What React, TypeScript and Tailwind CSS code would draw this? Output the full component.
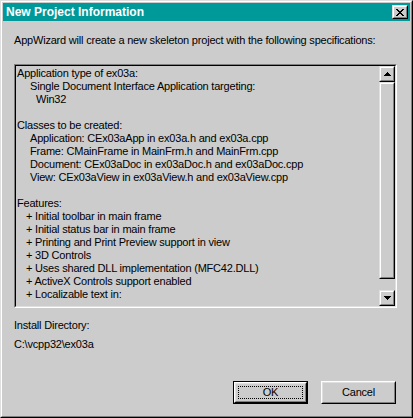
import type { ReactNode } from 'react';

const font = "font-['Liberation_Sans',Arial,sans-serif]";

const specLines: [number, string][] = [
  [0, 'Application type of ex03a:'],
  [13, 'Single Document Interface Application targeting:'],
  [19, 'Win32'],
  [0, ''],
  [0, 'Classes to be created:'],
  [13, 'Application: CEx03aApp in ex03a.h and ex03a.cpp'],
  [13, 'Frame: CMainFrame in MainFrm.h and MainFrm.cpp'],
  [13, 'Document: CEx03aDoc in ex03aDoc.h and ex03aDoc.cpp'],
  [13, 'View: CEx03aView in ex03aView.h and ex03aView.cpp'],
  [0, ''],
  [0, 'Features:'],
  [9, '+ Initial toolbar in main frame'],
  [9, '+ Initial status bar in main frame'],
  [9, '+ Printing and Print Preview support in view'],
  [9, '+ 3D Controls'],
  [9, '+ Uses shared DLL implementation (MFC42.DLL)'],
  [9, '+ ActiveX Controls support enabled'],
  [9, '+ Localizable text in:'],
];

// raised bevel used by scrollbar parts and the caption button
function Raised({ className, children }: { className?: string; children?: ReactNode }) {
  return (
    <div className={`border border-t-[#dfdfdf] border-l-[#dfdfdf] border-r-black border-b-black ${className ?? ''}`}>
      <div className="w-full h-full border border-t-white border-l-white border-r-[#808080] border-b-[#808080] bg-[#cccccc] flex items-center justify-center">
        {children}
      </div>
    </div>
  );
}

function Arrow({ down }: { down?: boolean }) {
  return (
    <svg width="7" height="4" viewBox="0 0 7 4" shapeRendering="crispEdges" className={down ? 'rotate-180' : ''}>
      <rect x="3" y="0" width="1" height="1" fill="#000" />
      <rect x="2" y="1" width="3" height="1" fill="#000" />
      <rect x="1" y="2" width="5" height="1" fill="#000" />
      <rect x="0" y="3" width="7" height="1" fill="#000" />
    </svg>
  );
}

function CloseGlyph() {
  const px: [number, number, number][] = [
    [0, 0, 2], [6, 0, 2],
    [1, 1, 2], [5, 1, 2],
    [2, 2, 4],
    [3, 3, 2],
    [2, 4, 4],
    [1, 5, 2], [5, 5, 2],
    [0, 6, 2], [6, 6, 2],
  ];
  return (
    <svg width="8" height="7" viewBox="0 0 8 7" shapeRendering="crispEdges">
      {px.map(([x, y, w], i) => (
        <rect key={i} x={x} y={y} width={w} height="1" fill="#000" />
      ))}
    </svg>
  );
}

function PushButton({ label, isDefault }: { label: string; isDefault?: boolean }) {
  const bevel = (
    <div className="w-full h-full border border-t-white border-l-white border-r-black border-b-black">
      <div className="w-full h-full border border-t-[#dfdfdf] border-l-[#dfdfdf] border-r-[#808080] border-b-[#808080] flex items-center justify-center p-[2px]">
        {isDefault ? (
          <div className="w-full h-full border border-dotted border-black flex items-center justify-center">{label}</div>
        ) : (
          label
        )}
      </div>
    </div>
  );
  return (
    <div className={`w-[75px] h-[23px] ${isDefault ? 'border border-black' : ''}`}>{bevel}</div>
  );
}

export default function App() {
  return (
    <div className={`w-[413px] h-[418px] bg-[#cccccc] text-black text-[11px] leading-[13px] tracking-[-0.2px] ${font}`}>
      <div className="w-full h-full border border-t-[#dfdfdf] border-l-[#dfdfdf] border-r-black border-b-black">
        <div className="w-full h-full border border-t-white border-l-white border-r-[#808080] border-b-[#808080] p-px flex flex-col">
          {/* caption */}
          <div className="h-[18px] bg-[#009999] flex items-center justify-between pl-[3px] pr-[2px]">
            <span className="text-white font-bold text-[12px] tracking-normal">New Project Information</span>
            <Raised className="w-[16px] h-[14px]">
              <CloseGlyph />
            </Raised>
          </div>

          <div className="flex flex-col pl-[11px] pr-[13px] pt-[13px]">
            <div>AppWizard will create a new skeleton project with the following specifications:</div>

            {/* read-only spec box */}
            <div className="mt-[17px] h-[244px] border border-t-[#808080] border-l-[#808080] border-r-white border-b-white">
              <div className="w-full h-full border border-t-black border-l-black border-r-[#dfdfdf] border-b-[#dfdfdf] flex">
                <div className="flex-1 pt-px pl-px overflow-hidden whitespace-nowrap">
                  {specLines.map(([indent, text], i) => (
                    <div key={i} className="h-[13px]" style={{ paddingLeft: indent }}>
                      {text}
                    </div>
                  ))}
                </div>
                <div className="w-[16px] flex flex-col">
                  <Raised className="h-[16px]">
                    <Arrow />
                  </Raised>
                  <Raised className="h-[197px]" />
                  <div className="flex-1" />
                  <Raised className="h-[16px]">
                    <Arrow down />
                  </Raised>
                </div>
              </div>
            </div>

            <div className="mt-[11px]">Install Directory:</div>
            <div className="mt-[6px]">C:\vcpp32\ex03a</div>

            <div className="mt-[30px] flex justify-end gap-[13px] pr-px">
              <PushButton label="OK" isDefault />
              <PushButton label="Cancel" />
            </div>
          </div>
        </div>
      </div>
    </div>
  );
}
